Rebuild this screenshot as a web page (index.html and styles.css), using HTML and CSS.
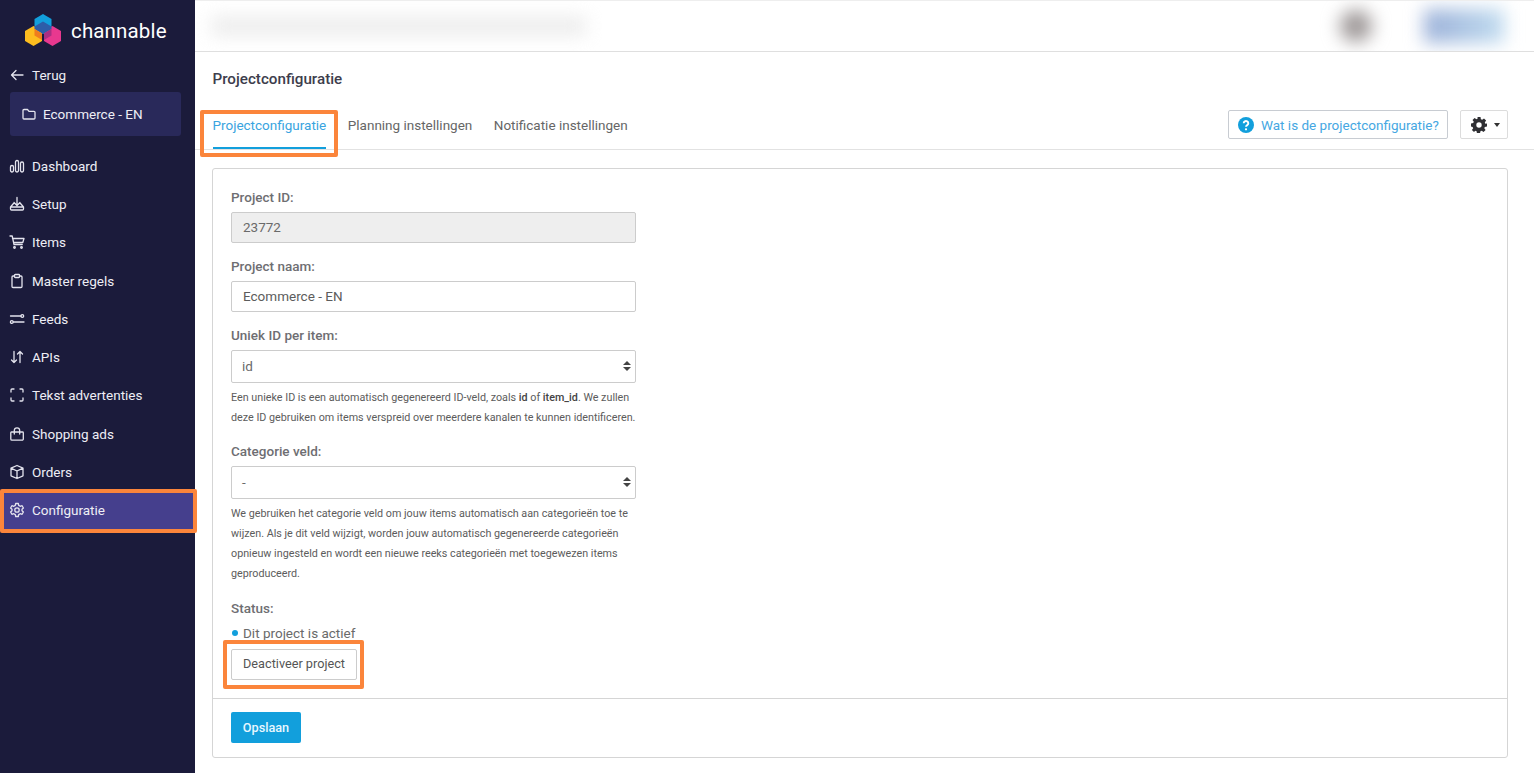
FILE: index.html
```html
<!DOCTYPE html>
<html lang="nl">
<head>
<meta charset="utf-8">
<title>Projectconfiguratie</title>
<link rel="stylesheet" href="styles.css">
</head>
<body>
<aside class="sidebar">
  <div class="brand">
    <svg class="logo" viewBox="0 0 38 36" width="38" height="36">
      <path d="M19 1l8.500 5v10L19 21l-8.500-5V6z" fill="#129fdc"/>
      <path d="M9.500 13L18 18v10l-8.500 5L1 28V18z" fill="#fdbd1f"/>
      <path d="M28.500 13L37 18v10l-8.500 5L20 28V18z" fill="#e8388f"/>
      <path d="M10.500 13.600V16L19 21l8.500-5v-2.400L19 8.500z" fill="#2d5da8"/>
      <path d="M10.500 16L18 20.400V27l-7.500-4.400z" fill="#ef7d1d"/>
      <path d="M27.500 16L20 20.400V27l7.500-4.400z" fill="#a92f83"/>
    </svg>
    <span class="brand-name">channable</span>
  </div>
  <a class="back">
    <svg class="icon" viewBox="0 0 16 16"><path d="M14 8H2.500M7 3.500L2.500 8 7 12.500"/></svg>
    <span>Terug</span>
  </a>
  <div class="project">
    <svg class="icon" viewBox="0 0 16 16"><path d="M2 4.500a1 1 0 0 1 1-1h3.500l1.500 1.800h5a1 1 0 0 1 1 1V12a1 1 0 0 1-1 1H3a1 1 0 0 1-1-1z"/></svg>
    <span>Ecommerce - EN</span>
  </div>
  <nav class="nav">
    <a class="nav-item"><svg class="icon" viewBox="0 0 16 16"><rect x="1.500" y="7.500" width="3" height="6.500" rx="1.400"/><rect x="6.500" y="2.500" width="3" height="11.500" rx="1.400"/><rect x="11.500" y="4" width="3" height="10" rx="1.400"/></svg><span>Dashboard</span></a>
    <a class="nav-item"><svg class="icon" viewBox="0 0 16 16"><path d="M8 1.500v8M5 6.500l3 3 3-3M4.500 7.500L1.500 11v2a1 1 0 0 0 1 1h11a1 1 0 0 0 1-1v-2l-3-3.500M1.500 11h13"/></svg><span>Setup</span></a>
    <a class="nav-item"><svg class="icon" viewBox="0 0 16 16"><path d="M1 2h2.200l1.800 8.500h8.200M3.500 4.500H15l-1.200 4H4.500"/><circle cx="5.500" cy="13.500" r=".8"/><circle cx="12.500" cy="13.500" r=".8"/></svg><span>Items</span></a>
    <a class="nav-item"><svg class="icon" viewBox="0 0 16 16"><path d="M5.500 3H4a1 1 0 0 0-1 1v9.500a1 1 0 0 0 1 1h8a1 1 0 0 0 1-1V4a1 1 0 0 0-1-1h-1.500"/><rect x="5.500" y="1.500" width="5" height="3" rx=".8"/></svg><span>Master regels</span></a>
    <a class="nav-item"><svg class="icon" viewBox="0 0 16 16"><path d="M1.500 5h10.500M4.500 11H15"/><circle cx="13.300" cy="5" r="1.400"/><circle cx="2.800" cy="11" r="1.400"/></svg><span>Feeds</span></a>
    <a class="nav-item"><svg class="icon" viewBox="0 0 16 16"><path d="M5 2.500v11M2.500 11L5 13.500 7.500 11M11 13.500v-11M8.500 5L11 2.500 13.500 5"/></svg><span>APIs</span></a>
    <a class="nav-item"><svg class="icon" viewBox="0 0 16 16"><path d="M2 5V3a1 1 0 0 1 1-1h2M11 2h2a1 1 0 0 1 1 1v2M14 11v2a1 1 0 0 1-1 1h-2M5 14H3a1 1 0 0 1-1-1v-2"/></svg><span>Tekst advertenties</span></a>
    <a class="nav-item"><svg class="icon" viewBox="0 0 16 16"><path d="M2.500 6h11a.8.8 0 0 1 .8.800V13a1.200 1.200 0 0 1-1.200 1.200H3A1.200 1.200 0 0 1 1.800 13V6.800A.8.8 0 0 1 2.500 6zM5.300 8V4.500a2.700 2.700 0 0 1 5.400 0V8"/></svg><span>Shopping ads</span></a>
    <a class="nav-item"><svg class="icon" viewBox="0 0 16 16"><path d="M8 1.500l6 2.700v7.600l-6 2.700-6-2.700V4.200zM2 4.200l6 2.800 6-2.800M8 7v7.500"/></svg><span>Orders</span></a>
    <a class="nav-item active"><svg class="icon" viewBox="0 0 16 16"><path d="M6.700 1.500h2.600l.4 1.900 1.500.9 1.900-.6 1.300 2.300-1.400 1.300v1.400l1.400 1.300-1.300 2.300-1.900-.6-1.500.9-.4 1.900H6.700l-.4-1.900-1.500-.9-1.900.6-1.300-2.300 1.400-1.300V7.300L1.600 6l1.300-2.300 1.900.6 1.500-.9z"/><circle cx="8" cy="8" r="2.200"/></svg><span>Configuratie</span><i class="mark mark-nav"></i></a>
  </nav>
</aside>
<div class="main">
  <header class="topbar">
    <div class="blur-crumb"></div>
    <div class="blur-user">
      <div class="blur-avatar"></div>
      <div class="blur-badge"></div>
    </div>
  </header>
  <section class="content">
    <h1 class="title">Projectconfiguratie</h1>
    <div class="tabbar">
      <div class="tabs">
        <a class="tab current">Projectconfiguratie<i class="mark mark-tab"></i></a>
        <a class="tab">Planning instellingen</a>
        <a class="tab">Notificatie instellingen</a>
      </div>
      <div class="tools">
        <a class="help">
          <svg class="help-icon" viewBox="0 0 16 16" width="16" height="16"><circle cx="8" cy="8" r="8" fill="#129fdc"/><path d="M5.700 6.200a2.300 2.200 0 1 1 3.500 1.900c-.8.500-1.200.9-1.200 1.700" fill="none" stroke="#fff" stroke-width="1.900"/><circle cx="8" cy="12.300" r="1.150" fill="#fff"/></svg>
          Wat is de projectconfiguratie?
        </a>
        <a class="gear">
          <svg viewBox="0 0 16 16" width="16" height="16"><path fill-rule="evenodd" fill="#2f2f33" d="M6.500 0h3l.4 2.200 1.300.6L13 1.500l2.100 2.100-1.300 1.800.6 1.300L16 6.500v3l-2.200.4-.5 1.300 1.300 1.800-2.100 2.100-1.800-1.300-1.300.5-.4 2.200h-3l-.4-2.200-1.300-.5L3 15.100.9 13l1.300-1.800-.6-1.300L0 9.500v-3l2.200-.4.6-1.300L1.500 3 3.600.9l1.800 1.300 1.300-.6zM8 5.300a2.700 2.700 0 1 0 0 5.400 2.700 2.700 0 0 0 0-5.400z"/></svg>
          <i class="caret"></i>
        </a>
      </div>
    </div>
    <form class="card">
      <div class="card-body">
        <label class="label">Project ID:</label>
        <div class="field disabled">23772</div>
        <label class="label">Project naam:</label>
        <div class="field">Ecommerce - EN</div>
        <label class="label">Uniek ID per item:</label>
        <div class="field select">id<i class="updown"></i></div>
        <p class="hint">Een unieke ID is een automatisch gegenereerd ID-veld, zoals <b>id</b> of <b>item_id</b>. We zullen deze ID gebruiken om items verspreid over meerdere kanalen te kunnen identificeren.</p>
        <label class="label">Categorie veld:</label>
        <div class="field select">-<i class="updown"></i></div>
        <p class="hint hint-long">We gebruiken het categorie veld om jouw items automatisch aan categorieën toe te wijzen. Als je dit veld wijzigt, worden jouw automatisch gegenereerde categorieën opnieuw ingesteld en wordt een nieuwe reeks categorieën met toegewezen items geproduceerd.</p>
        <label class="label status">Status:</label>
        <div class="state"><i class="dot"></i>Dit project is actief</div>
        <a class="btn">Deactiveer project<i class="mark mark-btn"></i></a>
      </div>
      <div class="card-foot"><a class="save">Opslaan</a></div>
    </form>
  </section>
</div>
</body>
</html>
```
FILE: styles.css
```css
* { box-sizing: border-box; }
html, body { margin: 0; height: 773px; overflow: hidden; }
body { display: flex; font-family: Roboto, "Liberation Sans", sans-serif; font-size: 13.500px; background: #fff; color: #555; }

.sidebar { width: 195px; flex: none; height: 773px; background: #1b1b3b; color: #eeeef5; padding-top: 12px; }
.brand { display: flex; align-items: center; height: 37px; padding-left: 24px; gap: 9px; }
.logo { flex: none; }
.brand-name { font-size: 20.500px; color: #fff; letter-spacing: .15px; }
.icon { width: 16px; height: 16px; flex: none; fill: none; stroke: #e4e4ee; stroke-width: 1.300; stroke-linecap: round; stroke-linejoin: round; }
.back { display: flex; align-items: center; gap: 7px; height: 20px; margin-top: 16px; padding-left: 9px; }
.project { display: flex; align-items: center; gap: 6px; margin: 7px 14px 0 10px; height: 44px; padding-left: 11px; background: #29295a; border-radius: 3px; }
.nav { margin-top: 10.700px; }
.nav-item { position: relative; display: flex; align-items: center; gap: 7px; height: 38.250px; padding-left: 9px; }
.nav-item.active { background: #453f8d; margin-right: 2px; }

.mark { position: absolute; border: 4px solid #fb853b; border-radius: 2px; pointer-events: none; }
.mark-nav { left: 0; right: -4px; top: -2px; bottom: -4px; }
.mark-tab { left: -13px; right: -12px; top: -5px; bottom: -10px; }
.mark-btn { left: -9px; right: -8px; top: -10px; bottom: -10px; }

.main { flex: 1; min-width: 0; display: flex; flex-direction: column; }
.topbar { height: 52px; flex: none; display: flex; justify-content: space-between; align-items: center; border-top: 1px solid #eee; border-bottom: 1px solid #dfdfdf; overflow: hidden; padding: 0 30px 0 16px; }
.blur-crumb { width: 375px; height: 20px; background: #e3e3e3; filter: blur(9px); opacity: .65; }
.blur-user { display: flex; align-items: center; gap: 52px; }
.blur-avatar { width: 32px; height: 32px; border-radius: 50%; background: #9c9696; filter: blur(9px); }
.blur-badge { width: 80px; height: 34px; background: linear-gradient(90deg, #9bb0d8, #c0dcf0); filter: blur(9px); }

.content { flex: 1; padding: 0 26px 0 0; }
.title { margin: 19px 0 0 17.500px; font-size: 15.200px; line-height: 17px; font-weight: 500; color: #3d3d4c; }
.tabbar { display: flex; justify-content: space-between; align-items: flex-start; height: 62px; margin-right: -26px; padding-right: 26px; border-bottom: 1px solid #e2e2e2; }
.tabs { display: flex; gap: 21.500px; margin: 27px 0 0 17.500px; }
.tab { position: relative; display: block; height: 34px; line-height: 20px; color: #666; }
.tab.current { color: #39a4e0; border-bottom: 2px solid #129fdc; }
.tools { display: flex; gap: 12px; margin-top: 22px; }
.help { display: flex; align-items: center; gap: 7px; height: 29px; width: 220px; padding-left: 9px; border: 1px solid #c8ccd2; border-radius: 2px; color: #45a7e2; }
.help-icon { flex: none; }
.gear { display: flex; align-items: center; gap: 7px; height: 29px; width: 48px; padding-left: 10px; border: 1px solid #dcdcdc; border-radius: 2px; }
.caret { width: 0; height: 0; border: 3px solid transparent; border-top: 4px solid #333; border-bottom: 0; }

.card { margin: 18px 0 0 17px; height: 590px; border: 1px solid #d5d5d5; border-radius: 3px; display: flex; flex-direction: column; }
.card-body { flex: 1; padding: 19px 18px 0; }
.label { display: block; line-height: 18px; height: 18px; font-weight: 500; color: #6e6e72; margin-bottom: 6px; }
.field { position: relative; width: 405px; height: 31px; line-height: 29px; padding-left: 11px; border: 1px solid #ccc; border-radius: 2px; margin-bottom: 14px; color: #5c5c5c; background: #fff; }
.field.disabled { background: #eee; color: #6a6a6a; }
.field.select { height: 32.500px; line-height: 31px; color: #6a6a6a; margin-bottom: 5px; padding-left: 10px; }
.updown { position: absolute; right: 4px; top: 10px; width: 8px; height: 11px; }
.updown::before, .updown::after { content: ""; position: absolute; left: 0; width: 0; height: 0; border: 4px solid transparent; }
.updown::before { top: 0; border-bottom: 4.500px solid #444; border-top: 0; }
.updown::after { top: 6px; border-top: 4.500px solid #444; border-bottom: 0; }
.hint { margin: 0 0 14px; width: 408px; font-size: 10.750px; line-height: 20.300px; color: #5c5c5c; }
.hint-long { margin-top: 1px; }
.hint b { font-weight: 500; color: #444; }
.label.status { margin-top: 13px; margin-bottom: 7px; }
.state { display: flex; align-items: center; line-height: 18px; height: 18px; color: #6a6a6a; padding-left: 1px; }
.dot { width: 6px; height: 6px; border-radius: 50%; background: #129fdc; margin-right: 5px; }
.btn { position: relative; display: flex; align-items: center; justify-content: center; width: 126px; height: 31px; margin-top: 7px; padding-bottom: 2px; border: 1px solid #ccc; border-radius: 2px; font-size: 12.700px; color: #555; }
.card-foot { height: 59px; flex: none; border-top: 1px solid #d5d5d5; padding: 13px 18px; }
.save { display: flex; align-items: center; justify-content: center; width: 70px; height: 31px; background: #129fdc; border-radius: 2px; color: #e8f7ff; font-size: 12.700px; font-weight: 500; }
```
